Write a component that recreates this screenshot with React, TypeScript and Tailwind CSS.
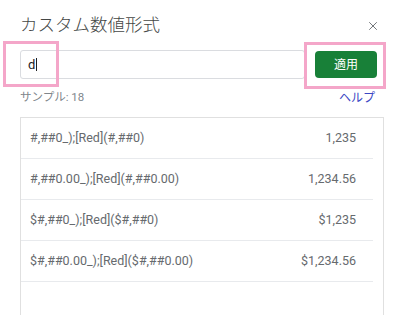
import { X } from 'lucide-react';

const ROWS = [
  { format: '#,##0_);[Red](#,##0)', sample: '1,235' },
  { format: '#,##0.00_);[Red](#,##0.00)', sample: '1,234.56' },
  { format: '$#,##0_);[Red]($#,##0)', sample: '$1,235' },
  { format: '$#,##0.00_);[Red]($#,##0.00)', sample: '$1,234.56' },
];

const font = { fontFamily: 'Roboto, "Noto Sans CJK JP", sans-serif' };

export default function App() {
  return (
    <div className="relative w-[400px] h-[315px] overflow-hidden bg-white" style={font}>
      <div className="flex flex-col pl-[20px] pt-[11px]">
        {/* header */}
        <div className="flex items-center justify-between h-[28px] pr-[20px]">
          <h2 className="text-[17.5px] leading-[28px] text-[#444746] font-light">カスタム数値形式</h2>
          <X className="w-[14px] h-[14px] text-[#5f6368] mt-[2px]" strokeWidth={1.5} />
        </div>

        {/* input row */}
        <div className="flex items-center mt-[11px] h-[29px]">
          <div className="flex items-center w-[285px] h-[29px] border border-[#dadce0] rounded-[3px] px-[7px]">
            <span className="text-[13px] text-[#202124]">d</span>
            <span className="w-[1px] h-[13px] bg-[#202124] ml-[1px]" />
          </div>
          <button className="ml-[10px] w-[62px] h-[27px] rounded-[4px] bg-[#188038] text-white text-[12px]">
            適用
          </button>
        </div>

        {/* sample / help */}
        <div className="flex items-center justify-between h-[18px] mt-[10px] pr-[25px]">
          <span className="text-[11.5px] text-[#80868b]">サンプル: 18</span>
          <span className="text-[12px] text-[#3b48c4]">ヘルプ</span>
        </div>

        {/* list */}
        <div className="mt-[10px] w-[364px] h-[220px] border border-[#e0e0e0] border-b-0">
          <div className="w-[352px] flex flex-col">
            {ROWS.map((row) => (
              <div
                key={row.format}
                className="flex items-center justify-between h-[41px] border-b border-[#e8eaed] pl-[9px] pr-[17px] text-[12.5px] text-[#666a6e]"
              >
                <span>{row.format}</span>
                <span>{row.sample}</span>
              </div>
            ))}
          </div>
        </div>
      </div>

      {/* annotation highlights */}
      <div className="absolute left-[3px] top-[41px] w-[56px] h-[46px] border-[3px] border-[#f4a6c9]" />
      <div className="absolute left-[304px] top-[42px] w-[82px] h-[47px] border-[3px] border-[#f4a6c9]" />
    </div>
  );
}
